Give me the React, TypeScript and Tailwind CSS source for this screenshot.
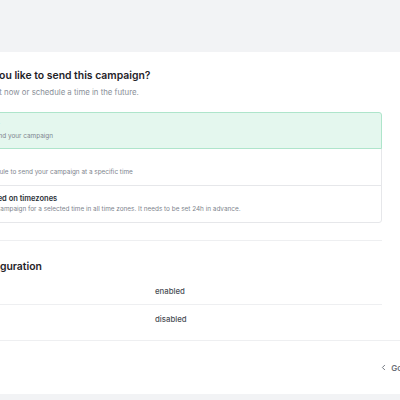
import { ChevronLeft } from "lucide-react";

const options = [
  { title: "Send now", desc: "Instantly send your campaign", selected: true, h: "h-[37px]" },
  { title: "Schedule", desc: "Set a schedule to send your campaign at a specific time", selected: false, h: "h-[38px]" },
  {
    title: "Send based on timezones",
    desc: "Send your campaign for a selected time in all time zones. It needs to be set 24h in advance.",
    selected: false,
    h: "h-[38px]",
  },
];

const settings = [
  { label: "Open tracking", value: "enabled", last: false },
  { label: "Click tracking", value: "disabled", last: true },
];

export default function App() {
  return (
    <div className="w-[400px] h-[400px] overflow-hidden bg-[#f2f3f5] font-['Inter',sans-serif] text-[#1f2328]">
      <div className="h-[52px]" />

      <div className="bg-white w-[620px] -ml-[90px]">
        <div className="pl-[18px] pt-[17px] w-[472px]">
          {/* delivery */}
          <h2 className="text-[10.4px] leading-[14px] font-semibold">When would you like to send this campaign?</h2>
          <p className="mt-[4px] ml-[2px] text-[7.8px] leading-[10px] text-[#8a8f98]">
            Choose to send out now or schedule a time in the future.
          </p>

          <div className="mt-[15px] flex flex-col">
            {options.map((o, i) => (
              <div
                key={o.title}
                className={`${o.h} border px-[12px] pt-[7px] flex gap-[10px] ${
                  i === 0 ? "rounded-t-[3px]" : "-mt-px"
                } ${i === options.length - 1 ? "rounded-b-[3px]" : ""} ${
                  o.selected ? "relative bg-[#e4f7ee] border-[#aee5cb]" : "border-[#e6e7ea]"
                }`}
              >
                <div
                  className={`mt-[1px] w-[10px] h-[10px] rounded-full border ${
                    o.selected ? "border-[4px] border-[#22b573]" : "border-[#c9ccd1]"
                  }`}
                />
                <div className="pl-[3px]">
                  <div className="text-[7.5px] leading-[11px] font-semibold text-[#2b2f36]">{o.title}</div>
                  <div className="text-[6.4px] leading-[11px] text-[#80858e] whitespace-nowrap">{o.desc}</div>
                </div>
              </div>
            ))}
          </div>

          <div className="mt-[17px] h-px bg-[#eeeff1]" />

          {/* configuration */}
          <h2 className="mt-[19px] text-[10.4px] leading-[14px] font-semibold">Tracking configuration</h2>
          <div className="mt-[3px] pb-[7px]">
            {settings.map((s) => (
              <div
                key={s.label}
                className={`h-[28px] pt-[2px] grid grid-cols-[227px_1fr] items-center text-[7.8px] ${
                  s.last ? "" : "border-b border-[#eeeff1]"
                }`}
              >
                <span className="text-[#7a7f88]">{s.label}</span>
                <span className="font-medium text-[#4a4e55]">{s.value}</span>
              </div>
            ))}
          </div>
        </div>

        <div className="border-t border-[#eeeff1] h-[54px] flex items-center pl-[18px]">
          <div className="w-[591px] flex justify-end items-center gap-[12px]">
            <button className="flex items-center gap-[3px] text-[8px] font-semibold text-[#6b7079]">
              <ChevronLeft size={9} strokeWidth={2.5} />
              Go back
            </button>
            <button className="h-[24px] px-[12px] rounded-[3px] bg-[#22b573] text-white text-[8px] font-semibold">
              Send campaign
            </button>
          </div>
        </div>
      </div>
    </div>
  );
}
